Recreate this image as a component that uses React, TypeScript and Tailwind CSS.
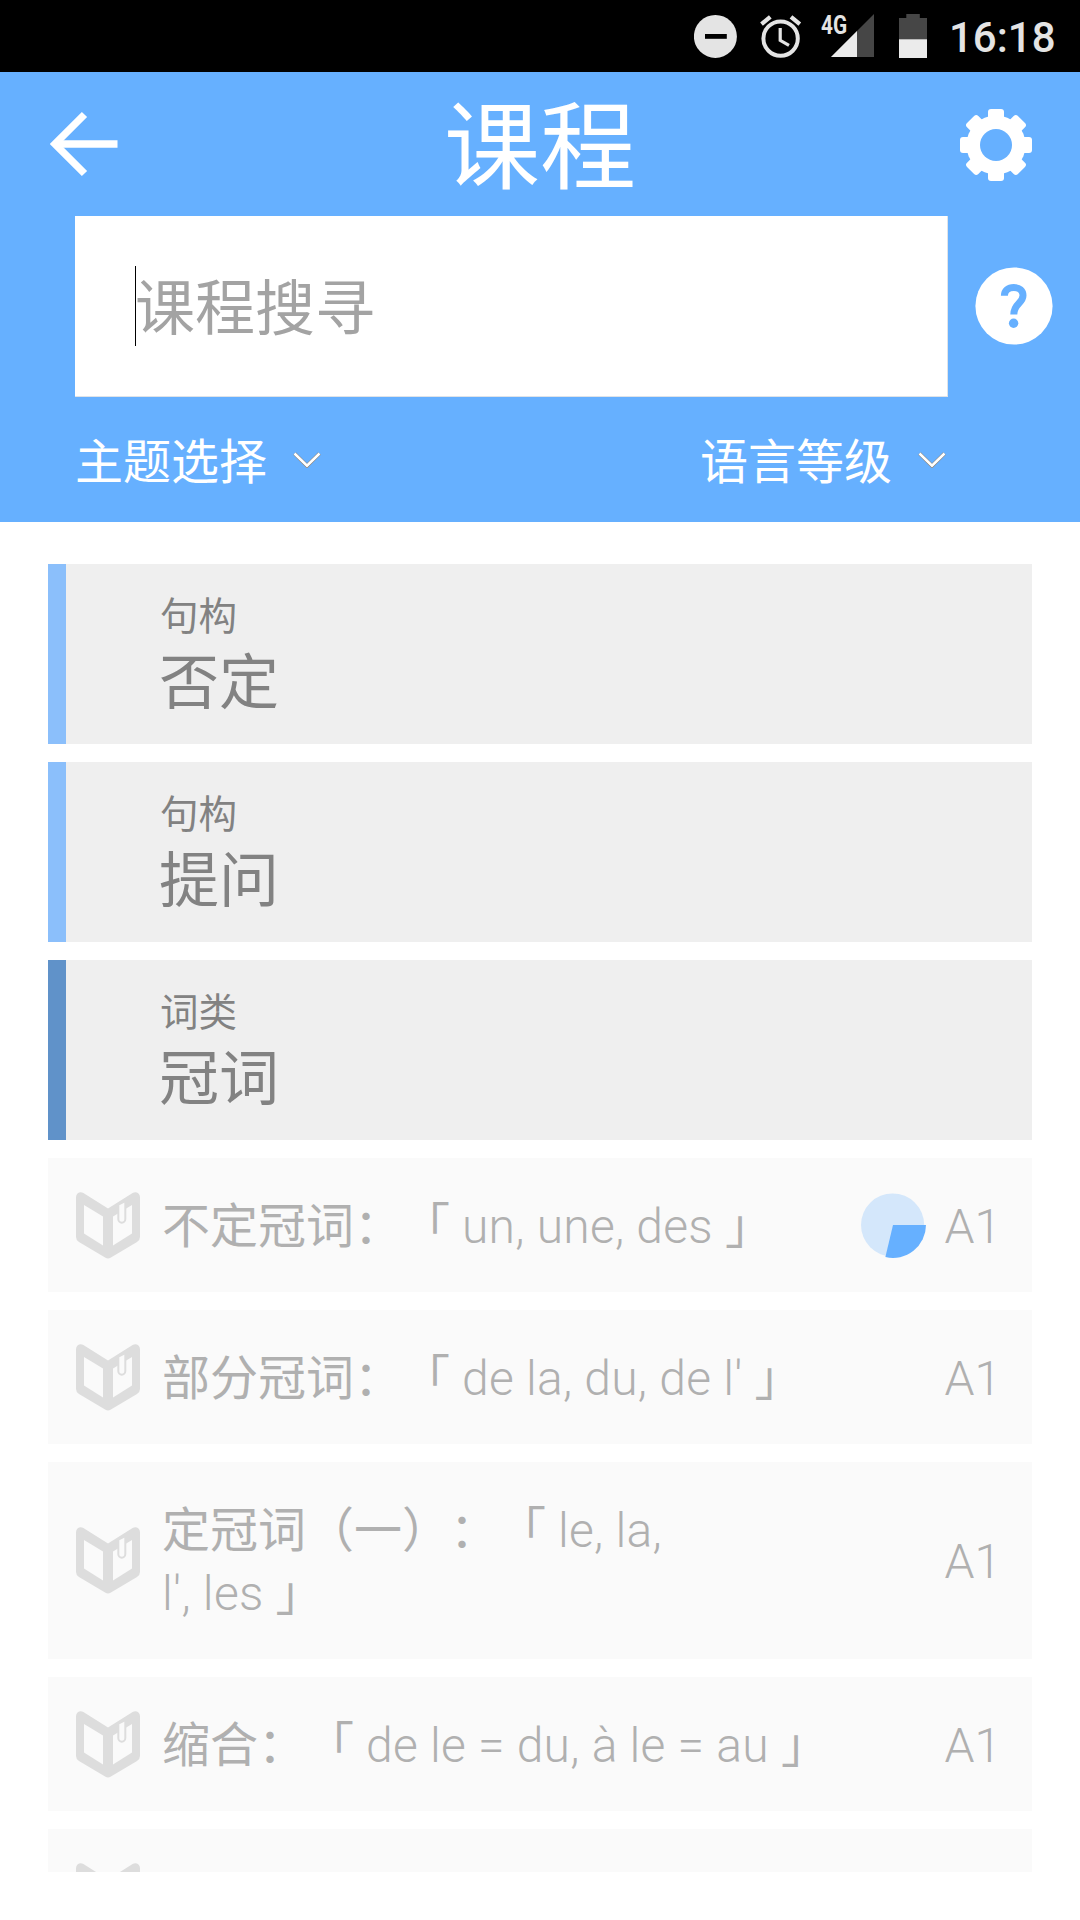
const FONT = "font-[Roboto,'Noto_Sans_CJK_SC',sans-serif]";

function StatusBar() {
  return (
    <div className="flex h-[72px] shrink-0 items-start bg-black pl-[694px] text-[#e4e4e4]">
      <svg className="h-[72px] w-[43px]" viewBox="694 0 43 72">
        <circle cx="715.4" cy="36.4" r="21.5" fill="#e4e4e4" />
        <rect x="705" y="34" width="21.8" height="4.8" fill="#000" />
      </svg>
      <svg className="ml-[22px] h-[72px] w-[44px]" viewBox="759 0 44 72" fill="none" stroke="#e4e4e4">
        <circle cx="780.6" cy="38.6" r="17.2" strokeWidth="4" />
        <path d="M761.5 24.2L770.3 16.8M799.8 24.2L791 16.8" strokeWidth="4.2" />
        <path d="M780.2 28V40.3L789 45.3" strokeWidth="3.2" />
      </svg>
      <div className="ml-[18px] h-[72px] w-[28px]">
        <span className="mt-[11px] block origin-left scale-x-[0.8] text-[26px] leading-[28px] font-bold">4G</span>
      </div>
      <svg className="-ml-[18px] h-[72px] w-[43px]" viewBox="831 0 43 72">
        <path d="M831 57L874 14V57Z" fill="#464646" />
        <path d="M831 57L857 31V57Z" fill="#ebebeb" />
      </svg>
      <svg className="ml-[25px] h-[72px] w-[28px]" viewBox="899 0 28 72">
        <path d="M899 18H906.3V14H919.8V18H927V58H899Z" fill="#464646" />
        <path d="M899 39.3H927V58H899Z" fill="#ebebeb" />
      </svg>
      <span className="ml-[22px] text-[42px] leading-[76px] font-medium">16:18</span>
    </div>
  );
}

function BackArrow() {
  return (
    <svg className="h-[66px] w-[70px]" viewBox="0 0 70 66" fill="none" stroke="#fff">
      <path d="M34.5 3.5L5 33L34.5 62.5" strokeWidth="7.4" />
      <path d="M5 33H67.5" strokeWidth="7.4" />
    </svg>
  );
}

function Gear() {
  return (
    <svg className="mt-px h-[72px] w-[72px]" viewBox="-36 -36 72 72">
      <g fill="#fff">
        {[0, 45, 90, 135].map((angle) => (
          <rect key={angle} x="-8" y="-36" width="16" height="72" rx="3" transform={`rotate(${angle})`} />
        ))}
        <circle r="29.6" />
      </g>
      <circle r="16" fill="#66b0ff" />
    </svg>
  );
}

function Help() {
  return (
    <svg className="h-[78px] w-[78px]" viewBox="0 0 78 78">
      <circle cx="39" cy="39" r="38.6" fill="#fff" />
      <path
        d="M29.4 28.8C29.4 23.5 33.2 20.6 38.8 20.6C44.4 20.6 48 23.5 48 28.6C48 36.5 38.8 36.5 38.8 47.5"
        fill="none"
        stroke="#66b0ff"
        strokeWidth="7"
      />
      <circle cx="38.6" cy="56.3" r="4.7" fill="#66b0ff" />
    </svg>
  );
}

function Selector({ label }: { label: string }) {
  return (
    <div className="flex items-start">
      <span className="text-[48px] leading-[72px]">{label}</span>
      <svg className="mt-[25px] ml-[26px] h-[16px] w-[28px]" viewBox="0 0 28 16" fill="none">
        <path d="M1.5 1.5L14 13.8L26.5 1.5" stroke="#8a8078" strokeWidth="3.8" />
        <path d="M1.5 1.5L14 13.6L26.5 1.5" stroke="#fff" strokeWidth="2.6" />
      </svg>
    </div>
  );
}

function Header() {
  return (
    <header className="h-[450px] shrink-0 bg-[#66b0ff] text-white">
      <div className="flex h-[144px] items-center justify-between pr-[48px] pl-[50px]">
        <BackArrow />
        <h1 className="pt-[8px] text-[96px] leading-[136px]">课程</h1>
        <Gear />
      </div>
      <div className="flex items-center pl-[75px]">
        <div className="flex h-[181px] w-[873px] items-center border-r border-b border-[#dfe3e8] bg-white pl-[60px]">
          <div className="h-[80px] w-px shrink-0 bg-black" />
          <span className="-ml-px pt-[8px] text-[60px] leading-[80px] text-[#a3a3a3]">课程搜寻</span>
        </div>
        <div className="-mt-px ml-[27px]">
          <Help />
        </div>
      </div>
      <div className="flex justify-between pt-[30px] pr-[134px] pl-[75px]">
        <Selector label="主题选择" />
        <Selector label="语言等级" />
      </div>
    </header>
  );
}

function Book() {
  return (
    <svg className="h-[67px] w-[64px] shrink-0" viewBox="0 0 64 67">
      <path
        d="M7 .8L32 16.5L57 .8Q60 -.6 62.5 1.6Q64 3 64 5.5V45Q64 48 61 50L34.5 65.8Q32 67 29.5 65.8L3 50Q0 48 0 45V5.5Q0 3 1.5 1.6Q4 -.6 7 .8Z"
        fill="#ddd"
      />
      <path d="M8 13L27 24.5V53.5L8 41.5Z" fill="#fafafa" />
      <path d="M37 24.5L56 13V41.5L37 53.5Z" fill="#fafafa" />
      <path
        d="M42.3 12.6L49.3 9V27A3.5 3.7 0 0 1 42.3 27Z"
        fill="#fafafa"
        stroke="#ddd"
        strokeWidth="2"
      />
    </svg>
  );
}

function Progress() {
  return (
    <svg className="mr-[18px] h-[66px] w-[66px]" viewBox="-33 -33 66 66">
      <circle cx="-.4" r="31.6" fill="#d4e7fb" />
      <path d="M0 0H33A33 33 0 0 1 -7.6 32.1Z" fill="#66b0ff" />
    </svg>
  );
}

const categories = [
  { kind: "句构", title: "否定", dark: false },
  { kind: "句构", title: "提问", dark: false },
  { kind: "词类", title: "冠词", dark: true },
];

// Each line is a list of [Chinese, French, Chinese] runs.
type Line = [string, string, string];

const lessons: { lines: Line[]; level: string; started?: boolean }[] = [
  { lines: [["不定冠词：「", " un, une, des ", "」"]], level: "A1", started: true },
  { lines: [["部分冠词：「", " de la, du, de l' ", "」"]], level: "A1" },
  {
    lines: [
      ["定冠词（一）：「", " le, la,", ""],
      ["", "l', les ", "」"],
    ],
    level: "A1",
  },
  { lines: [["缩合：「", " de le = du, à le = au ", "」"]], level: "A1" },
  { lines: [], level: "" },
];

export default function App() {
  return (
    <div className={`flex h-[1920px] w-[1080px] flex-col overflow-hidden bg-white ${FONT}`} lang="zh-CN">
      <StatusBar />
      <Header />
      <main className="flex h-[1350px] shrink-0 flex-col gap-[18px] overflow-hidden px-[48px] pt-[42px]">
        {categories.map((c) => (
          <section
            key={c.title}
            className={`h-[180px] shrink-0 border-l-[18px] bg-[#efefef] pt-[25px] pl-[93px] text-[#828282] ${
              c.dark ? "border-[#6092c9]" : "border-[#8bbffb]"
            }`}
          >
            <p className="pl-px text-[38.5px] leading-[55px]">{c.kind}</p>
            <p className="pt-px text-[60px] leading-[78px]">{c.title}</p>
          </section>
        ))}
        {lessons.map((l, i) => (
          <section
            key={i}
            className={`flex shrink-0 items-center bg-[#fafafa] pr-[31px] pl-[28px] text-[48px] leading-[63px] font-light text-[#b0b0b0] ${
              l.lines.length > 1 ? "h-[197px]" : "h-[134px]"
            }`}
          >
            <Book />
            <div className="ml-[22px] flex-1 pt-[3px] [text-spacing-trim:space-all]">
              {l.lines.map(([lead, french, tail]) => (
                <p key={french} className="h-[63px] whitespace-pre">
                  <span className="font-normal">{lead}</span>
                  <span className="tracking-[0.25px]">{french}</span>
                  <span className="font-normal">{tail}</span>
                </p>
              ))}
            </div>
            {l.started && <Progress />}
            <span className="pt-[2px]">{l.level}</span>
          </section>
        ))}
      </main>
    </div>
  );
}
